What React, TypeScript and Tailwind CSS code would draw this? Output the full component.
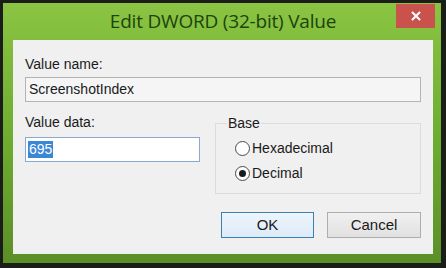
import { X } from 'lucide-react';

const App = () => {
  return (
    <div className="w-[446px] h-[268px] bg-[#1b1d18] pt-[3px] pl-[3px] pr-[5px] pb-[5px]" style={{ fontFamily: '"Liberation Sans", Arial, sans-serif' }}>
      <div className="relative w-full h-full flex flex-col bg-gradient-to-b from-[#8ac442] via-[#6fae31] to-[#5b8f28] pl-[10px] pr-[8px] pb-[9px]">
        {/* title bar */}
        <div className="h-[37px] flex items-center justify-center">
          <span className="text-[19px] text-[#1d430f] tracking-[-0.2px]" style={{ fontFamily: '"Open Sans", sans-serif' }}>
            Edit DWORD (32-bit) Value
          </span>
        </div>
        <button className="absolute top-[1px] right-[6px] w-[39px] h-[24px] bg-[#c9524c] flex items-center justify-center">
          <X size={14} strokeWidth={3.5} className="text-white" />
        </button>

        {/* client area */}
        <div className="flex-1 bg-[#f0f0f0] pl-[12px] pr-[12px] pt-[15px] text-[14px] text-[#1a1a1a]">
          <div className="leading-[18px]">Value name:</div>
          <div className="mt-[4px] h-[25px] border border-[#b4b4b4] bg-[#f5f5f5] flex items-center px-[3px]">
            ScreenshotIndex
          </div>
          <div className="mt-[11px] leading-[18px]">Value data:</div>
          <div className="flex">
            <div className="pt-[6px]">
              <div className="w-[175px] h-[25px] border border-[#8aa9cc] bg-white flex items-center px-[2px]">
                <span className="bg-[#3b86d6] text-white leading-[17px] px-[1px]">695</span>
              </div>
            </div>
            <div className="relative ml-[15px] mt-[-8px] w-[208px] h-[71px] border border-[#dcdcdc]">
              <span className="absolute left-[11px] top-[-9px] bg-[#f0f0f0] px-[1px] leading-[16px]">Base</span>
              <div className="flex flex-col gap-[9px] pl-[19px] pt-[16px]">
                <label className="flex items-center gap-[2px] h-[16px]">
                  <span className="w-[15px] h-[15px] rounded-full border border-[#4a4a4a] bg-white" />
                  <span>Hexadecimal</span>
                </label>
                <label className="flex items-center gap-[2px] h-[16px]">
                  <span className="w-[15px] h-[15px] rounded-full border border-[#4a4a4a] bg-white flex items-center justify-center">
                    <span className="w-[7px] h-[7px] rounded-full bg-[#1a1a1a]" />
                  </span>
                  <span>Decimal</span>
                </label>
              </div>
            </div>
          </div>
          <div className="flex justify-end gap-[13px] mt-[18px]">
            <button className="w-[93px] h-[26px] border border-[#3c7fb1] bg-gradient-to-b from-[#eef5fb] to-[#dcebf8] text-[15px]">
              OK
            </button>
            <button className="w-[94px] h-[26px] border border-[#adadad] bg-gradient-to-b from-[#f1f1f1] to-[#e1e1e1] text-[15px]">
              Cancel
            </button>
          </div>
        </div>
      </div>
    </div>
  );
};

export default App;
